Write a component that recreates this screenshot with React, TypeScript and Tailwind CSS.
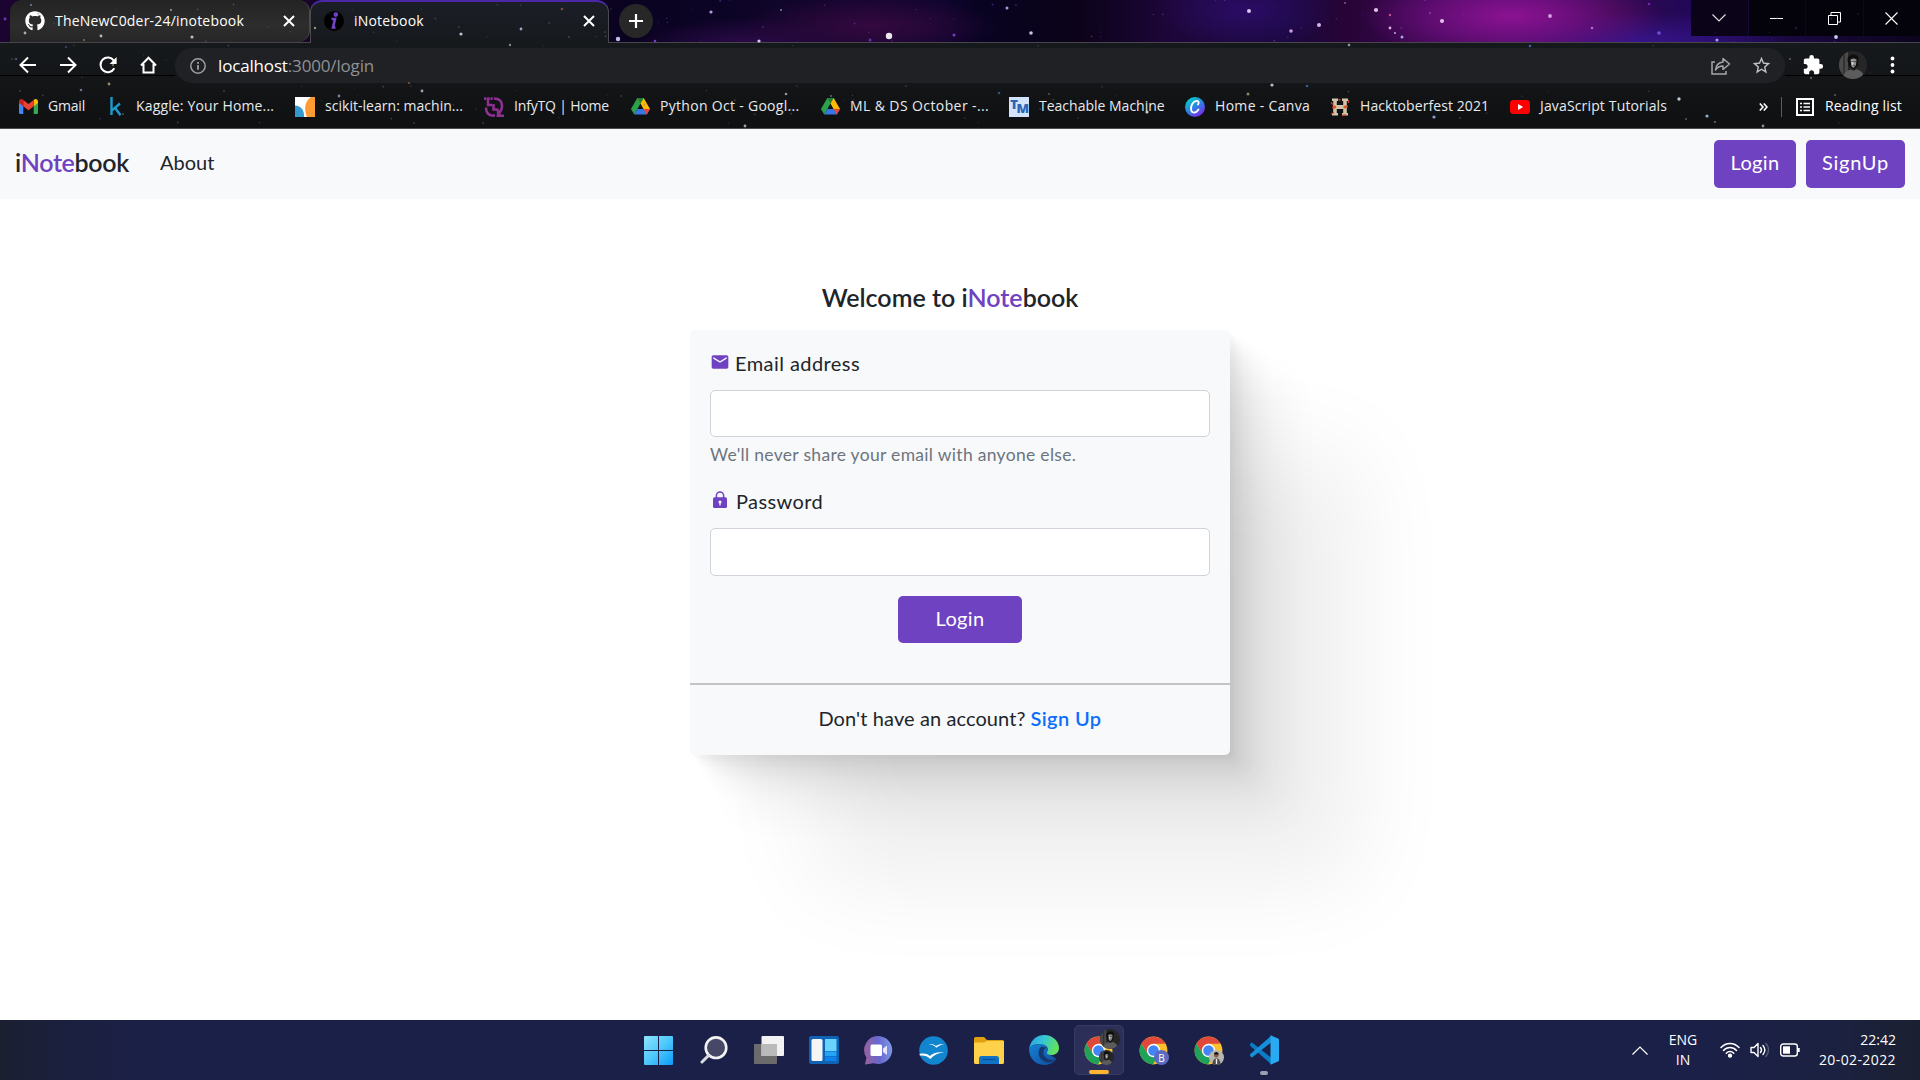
import { type ReactNode } from "react";
import { FaGithub } from "react-icons/fa";
import { MdEmail, MdExtension, MdStarOutline } from "react-icons/md";

function T({ className = "", children }: { className?: string; children: ReactNode }) {
  return <span className={`whitespace-pre ${className}`}>{children}</span>;
}

/* ---------- star field over the browser theme ---------- */

const BRIGHT: [number, number, number, string][] = [
  [889, 36, 3.2, "#ffffff"], [711, 12, 1.6, "#c9a7f5"], [759, 41, 1.6, "#e8dcff"], [1007, 8, 1.5, "#c9a7f5"],
  [1031, 33, 1.8, "#e6d2ff"], [954, 35, 1.5, "#7a45d8"], [870, 40, 1.5, "#6c34c8"], [1249, 11, 2, "#eadcff"],
  [1291, 31, 1.8, "#d9a8ee"], [1319, 25, 2, "#edc6f7"], [1376, 10, 2.1, "#f2d5fa"], [1390, 28, 1.4, "#eec4f0"],
  [1402, 37, 1.5, "#b7b5f7"], [1442, 21, 2, "#f0d5fa"], [1550, 16, 1.9, "#e0b0f0"], [1592, 28, 1.3, "#d070c8"],
  [1659, 33, 1.8, "#7a55e8"], [1717, 40, 1.6, "#9ab4ff"], [1836, 37, 1.9, "#d8e0ff"], [1390, 15, 1.2, "#d05a90"],
  [1395, 33, 1.1, "#c9a7f5"], [1345, 3, 1, "#a050b0"], [1430, 13, 1, "#9a40a8"], [1649, 4, 1.3, "#7a30b0"],
  [655, 41, 1.3, "#7a45d8"], [781, 10, 1, "#8b85a0"], [618, 39, 2.2, "#d8d4ff"], [5, 19, 1.4, "#7a3ad0"],
  [25, 33, 1.4, "#b9b9b9"], [101, 36, 1.4, "#c9c9c9"], [192, 37, 1.5, "#d5d5d5"], [171, 10, 1.2, "#8a8a8a"],
  [84, 40, 1, "#a06a60"], [31, 5, 1.1, "#7a8aa0"], [461, 34, 1.6, "#c8d4e8"], [521, 29, 1.4, "#a8b8e0"],
  [510, 45, 1.2, "#8a92a0"], [562, 9, 1.3, "#80504a"], [315, 28, 1.2, "#b0a080"], [109, 84, 1.4, "#a89a70"],
  [81, 90, 1.3, "#70809a"], [422, 91, 1.4, "#a8b4cc"], [409, 83, 1.1, "#90603a"], [786, 94, 1.3, "#a0a8b8"],
  [745, 126, 1.4, "#b0b4bc"], [1147, 112, 1.6, "#d8e0ea"], [1272, 85, 1.6, "#c8d4e8"], [1248, 94, 1.5, "#9a9468"],
  [1434, 117, 1.6, "#90b0e8"], [1679, 99, 1.7, "#d0d8e8"], [1707, 116, 1.6, "#a0b8e0"], [1763, 126, 1.4, "#9a9a9a"],
  [1307, 86, 1.3, "#4060a0"], [999, 93, 1.3, "#3c5888"], [1049, 94, 1.1, "#505a70"], [1349, 45, 1.3, "#a0a8b8"],
  [1530, 46, 1.3, "#4a68b0"], [831, 96, 1.2, "#505a70"], [16, 59, 1.3, "#405080"], [66, 47, 1, "#405080"],
  [113, 65, 1.2, "#7a7a60"], [1686, 119, 1, "#606060"], [1715, 122, 1.1, "#707070"], [1835, 95, 1.1, "#606060"],
  [123, 114, 1, "#555555"], [339, 96, 1.4, "#8090b0"], [1811, 78, 1.2, "#606468"], [1790, 59, 1.1, "#606468"],
];

const inOmnibox = (x: number, y: number) => x > 175 && x < 1786 && y > 46 && y < 84;

const FAINT = Array.from({ length: 190 }, (_, i) => ({
  x: (i * 733.7 + 91 * ((i * i) % 13)) % 1920,
  y: (i * 47.3 + 17 * ((i * 5) % 7)) % 127,
  r: 0.5 + (i % 3) * 0.2,
})).filter((s) => !inOmnibox(s.x, s.y));

function Stars() {
  return (
    <svg className="pointer-events-none absolute inset-0" width="1920" height="129" viewBox="0 0 1920 129">
      {FAINT.map((s, i) => (
        <circle key={i} cx={s.x} cy={s.y} r={s.r} fill={s.y < 42 && s.x > 620 ? "#7a4ac0" : "#6c7280"} opacity={0.5} />
      ))}
      {BRIGHT.map(([x, y, r, c], i) => (
        <circle key={i} cx={x} cy={y} r={r} fill={c} opacity={0.9} />
      ))}
    </svg>
  );
}

/* ---------- small browser icons ---------- */

const CloseX = () => (
  <svg width="12" height="12" viewBox="0 0 12 12" stroke="#fff" strokeWidth="2">
    <path d="M1 1l10 10M11 1L1 11" />
  </svg>
);

const NavArrow = ({ flip = false }: { flip?: boolean }) => (
  <svg width="18" height="18" viewBox="0 0 18 18" fill="none" stroke="#fff" strokeWidth="2" className={flip ? "-scale-x-100" : ""}>
    <path d="M17 9H2M9 1.5L1.5 9 9 16.5" />
  </svg>
);

const Reload = () => (
  <svg width="19" height="18" viewBox="0 0 19 18" fill="none" stroke="#fff" strokeWidth="2">
    <path d="M15.3 12.2A7.3 7.3 0 1 1 14.8 4.6" />
    <path d="M17.6 1v7h-7z" fill="#fff" stroke="none" />
  </svg>
);

const Home = () => (
  <svg width="17" height="18" viewBox="0 0 17 18" fill="none" stroke="#fff" strokeWidth="2">
    <path d="M1 9.5L8.5 1.7 16 9.5M3.5 8v8.6h10V8" />
  </svg>
);

const Gmail = () => (
  <svg width="19" height="15" viewBox="0 0 19 15">
    <path d="M0 3.2v10.5A1.3 1.3 0 0 0 1.3 15H4.3V6z" fill="#4285f4" />
    <path d="M19 3.2v10.5a1.3 1.3 0 0 1-1.3 1.3h-3V6z" fill="#34a853" />
    <path d="M14.7 1.5V7.2L19 4V2.5C19 .3 16.7-.7 15 .6z" fill="#fbbc04" />
    <path d="M0 2.5V4l4.3 3.2V1.5L4 .6C2.3-.7 0 .3 0 2.5z" fill="#c5221f" />
    <path d="M4.3 7.3V1.1L9.5 5l5.2-3.9v6.2L9.5 11.2z" fill="#ea4335" />
  </svg>
);

const Kaggle = () => (
  <svg width="12" height="20" viewBox="0 0 12 20" fill="none" stroke="#1b9ccf" strokeWidth="2.4">
    <path d="M1.5 0v18M10 6.5L2 13.3M5 10.8l5.5 7.5" />
  </svg>
);

const Scikit = () => (
  <svg width="20" height="20" viewBox="0 0 20 20">
    <path d="M0 0h20v20H0z" fill="#fff" />
    <path d="M20 0v20h-8C8.5 12 10 4 16 0z" fill="#ff9b33" />
    <path d="M0 8.5c6 0 9.5 5 9 11.5H0z" fill="#3499cd" />
  </svg>
);

const InfyTQ = () => (
  <svg width="20" height="20" viewBox="0 0 20 20" fill="none" stroke="#8e3092" strokeWidth="2.6">
    <path d="M0 1.6h9" strokeDasharray="2.4 .8" />
    <path d="M4 1v7h4M10 1.5c6 0 8 3 8 7.500 0 4-2 6.500-5 7.500M2 10.500c0 4 1.500 7.500 6 8h3M9.500 7v5.500h4M13 12l3 6.500M12.500 18.700H20" />
  </svg>
);

const Drive = () => (
  <svg width="19" height="17" viewBox="0 0 19 17">
    <path d="M6.3 0L0 11l3.2 5.6L9.5 5.6z" fill="#2ba24c" />
    <path d="M6.3 0h6.4L19 11h-6.4z" fill="#ffba00" />
    <path d="M3.2 16.6L6.4 11H19l-3.2 5.6z" fill="#3777e3" />
    <path d="M15.8 16.6L12.6 11H19z" fill="#ea4335" />
    <path d="M6.3 0h6.4L9.5 5.6z" fill="#188038" />
  </svg>
);

const TeachableIcon = () => (
  <span className="flex size-5 items-center justify-center bg-[#d2e3fc] font-['Open_Sans',sans-serif] text-[13px] font-extrabold leading-none tracking-[-1.5px] text-[#2b63b5]">
    <span className="-mt-1">T</span>
    <span className="mt-1">M</span>
  </span>
);

const Canva = () => (
  <svg width="20" height="20" viewBox="0 0 20 20">
    <defs>
      <linearGradient id="cv" x1="0" y1="0" x2="0.7" y2="1">
        <stop offset="0.2" stopColor="#08c3cc" />
        <stop offset="0.65" stopColor="#3a72e8" />
        <stop offset="1" stopColor="#7d2ae8" />
      </linearGradient>
    </defs>
    <circle cx="10" cy="10" r="10" fill="url(#cv)" />
    <path d="M13 7.5c1.5-2 .5-3.900-1.500-3.700C8 4.200 5.800 8.500 6 11.800c.2 5 4.800 4.800 7.500.6" fill="none" stroke="#fff" strokeWidth="1.8" strokeLinecap="round" />
  </svg>
);

const Hackto = () => (
  <svg width="20" height="20" viewBox="0 0 20 20">
    <path d="M2 1.5h6V4H6.8v4h6.4V4H12V1.5h6V4h-1.2v12H18v2.5h-6V16h1.2v-4H6.8v4H8v2.5H2V16h1.2V4H2z" fill="#cfc4a8" />
    <g fill="none" stroke="#c8402c" strokeWidth="1.3">
      <path d="M8.5 2.5l2 .5M18.5 3v3M1 5.5l2 2M1 17l3-1.5M12 18.5l4-.5M15 9.5h3M2 10.5h3" />
    </g>
    <circle cx="4.8" cy="10" r="1.5" fill="#f0501e" />
    <circle cx="14.8" cy="10" r="1.5" fill="#f0501e" />
  </svg>
);

const Youtube = () => (
  <svg width="20" height="14" viewBox="0 0 20 14">
    <rect width="20" height="14" rx="3.5" fill="#f00" />
    <path d="M8 4v6l5.2-3z" fill="#fff" />
  </svg>
);

const Portrait = ({ size }: { size: number }) => (
  <svg width={size} height={size} viewBox="0 0 28 28" className="rounded-full">
    <rect width="28" height="28" fill="#262626" />
    <path d="M0 0h9v28H0z" fill="#4a4a4a" />
    <path d="M5 0v28" stroke="#333" strokeWidth="2" />
    <path d="M8.500 9C8 3 18 1.500 19.500 6.500l-.5 8-4 4-5-3z" fill="#0e0e0e" />
    <path d="M11.500 8.500c1.500-1.500 4.500-1.500 6 0l-.5 5.500-2.500 3-2.200-1.800z" fill="#8f8f8f" />
    <path d="M12.300 9.500l2 .2.300 5-1.600-.7z" fill="#dcdcdc" />
    <path d="M11.500 10.600h6M13.500 14.200h2.500" stroke="#3a3a3a" strokeWidth=".8" />
    <path d="M3 28c1-6 5-8 8.500-9.500l3 1.200 3-1.500c4.500 1 7.500 4 8 9.800z" fill="#5c5c5c" />
  </svg>
);

/* ---------- browser chrome ---------- */

function TabStrip() {
  return (
    <div className="relative flex h-[43px] items-stretch border-b border-[#48464c] bg-[radial-gradient(ellipse_150px_46px_at_1512px_16px,#8a1292_0%,#7a1088b0_45%,transparent_100%),radial-gradient(ellipse_130px_30px_at_870px_26px,#34093f_0%,transparent_100%),radial-gradient(ellipse_110px_26px_at_745px_44px,#2c0a48_0%,transparent_100%),radial-gradient(ellipse_90px_40px_at_1245px_10px,#2b0c66_0%,transparent_100%),radial-gradient(ellipse_150px_30px_at_1640px_42px,#36148a_0%,transparent_100%),linear-gradient(90deg,#1b0430_0%,#180428_20%,#0a0320_33%,#0c0426_38%,#160530_45%,#10042e_49%,#080322_51%,#0b0318_56%,#1d0638_61%,#1c083c_64%,#1a083e_67%,#260436_70%,#3a0750_74%,#4a0b62_79%,#300848_84%,#22085a_88%,#17083c_94%,#0c041c_100%)]">
      <div className="ml-[10px] flex w-[300px] items-center rounded-xl rounded-bl-none border-r border-[#4b4b4d] bg-[linear-gradient(180deg,#232323,#2d2d2d_60%,#262626)] pb-px pl-[15px] pr-[14px]">
        <FaGithub className="size-5 text-white" />
        <T className="-mt-px ml-[10px] text-[14px] tracking-[0.2px] text-white">TheNewC0der-24/inotebook</T>
        <span className="ml-auto"><CloseX /></span>
      </div>
      <div className="relative -mb-px flex w-[299px] items-center rounded-t-xl border-x border-t-2 border-[#4b4b4f] border-t-[#4a28a8] bg-[linear-gradient(180deg,#1b1e26,#16191c)] pb-1 pl-[13px] pr-[13px]">
        <span className="flex size-5 items-center justify-center rounded-full bg-black">
          <svg width="10" height="18" viewBox="0 0 10 18" fill="none" stroke="#7443cc" strokeWidth="2.6">
            <path d="M2.5 7h3.5L4 15.5h2.5" />
            <circle cx="6.8" cy="2.6" r="1" />
          </svg>
        </span>
        <T className="-mt-px ml-[10px] text-[14px] tracking-[0.2px] text-white">iNotebook</T>
        <span className="ml-auto"><CloseX /></span>
      </div>
      <span className="ml-[10px] mt-1 flex size-[34px] items-center justify-center rounded-full bg-[#272727]">
        <svg width="14" height="14" viewBox="0 0 14 14" stroke="#fff" strokeWidth="2.2"><path d="M7 0v14M0 7h14" /></svg>
      </span>
      <div className="ml-auto flex h-9 w-[229px] items-center bg-[#04020a] [&>span]:flex [&>span]:h-9 [&>span]:flex-1 [&>span]:items-center [&>span]:justify-center">
        <span className="border-r border-[#140a30] bg-[#0b0418]">
          <svg width="14" height="8" viewBox="0 0 14 8" fill="none" stroke="#ddd" strokeWidth="1.2"><path d="M.5.5L7 7 13.5.5" /></svg>
        </span>
        <span className="border-r border-[#0c0822]"><i className="h-px w-[13px] bg-white" /></span>
        <span className="border-r border-[#0c0822]">
          <svg width="13" height="13" viewBox="0 0 13 13" fill="none" stroke="#fff" strokeWidth="1"><path d="M.5 3.5h9v9h-9zM3 3.5V.5h9.5V10h-3" /></svg>
        </span>
        <span>
          <svg width="13" height="13" viewBox="0 0 13 13" stroke="#fff" strokeWidth="1.1"><path d="M.5.5l12 12M12.5.5l-12 12" /></svg>
        </span>
      </div>
    </div>
  );
}

function AddressRow() {
  return (
    <div className="flex h-[45px] items-start bg-[linear-gradient(180deg,#16191c,#131517)]">
      <div className="flex h-[33px] w-[175px] items-center gap-[22px] border-b border-black pl-[19px] pt-[11px]">
        <NavArrow />
        <NavArrow flip />
        <Reload />
        <Home />
      </div>
      <div className="mt-[5px] flex h-[35px] w-[1610px] items-center rounded-full bg-[#202124] pl-[15px] pr-[13px]">
        <svg width="16" height="16" viewBox="0 0 16 16" fill="none" stroke="#9aa0a6" strokeWidth="1.5">
          <circle cx="8" cy="8" r="7.2" />
          <path d="M8 7v4.8M8 4v1.7" strokeWidth="1.8" />
        </svg>
        <T className="ml-[12px] text-[17px] tracking-[-0.16px] text-[#8e9195]"><span className="text-white">localhost</span>:3000/login</T>
        <svg className="ml-auto" width="20" height="18" viewBox="0 0 20 18" fill="none" stroke="#a4a6aa" strokeWidth="1.5">
          <path d="M4 5H1v12h14v-3" />
          <path d="M12 1.5V5c-4.5.5-7 3-7.5 8 2-3 4-4 7.5-4v3.5L18.5 7z" strokeLinejoin="round" />
        </svg>
        <MdStarOutline className="ml-[20px] size-[21px] text-[#c0c2c5]" />
      </div>
      <div className="flex h-[33px] flex-1 items-center border-b border-black [&>*]:mt-[11px]">
        <MdExtension className="ml-[17px] size-[22px] text-white" />
        <span className="ml-[15px]"><Portrait size={28} /></span>
        <svg className="ml-[23px]" width="5" height="18" viewBox="0 0 5 18" fill="#fff">
          <circle cx="2.5" cy="2.5" r="1.9" /><circle cx="2.5" cy="9" r="1.9" /><circle cx="2.5" cy="15.5" r="1.9" />
        </svg>
      </div>
    </div>
  );
}

function Bookmark({ icon, width, children }: { icon: ReactNode; width: string; children: ReactNode }) {
  return (
    <div className={`flex shrink-0 items-center ${width}`}>
      <span className="mr-[10px] flex w-5 shrink-0 items-center justify-center">{icon}</span>
      {children}
    </div>
  );
}

function BookmarkBar() {
  return (
    <div className="flex h-[41px] items-center border-b border-[#4a4a4a] bg-[linear-gradient(180deg,#121416,#0e1012)] pb-[3px] pl-[18px] text-[14px] text-[#e8eaed]">
      <Bookmark width="w-[88px]" icon={<Gmail />}><T className="-mt-0.5 tracking-[-0.2px]">Gmail</T></Bookmark>
      <Bookmark width="w-[189px]" icon={<Kaggle />}><T className="-mt-0.5 tracking-[0.15px]">Kaggle: Your Home...</T></Bookmark>
      <Bookmark width="w-[189px]" icon={<Scikit />}><T className="-mt-0.5 tracking-[0.03px]">scikit-learn: machin...</T></Bookmark>
      <Bookmark width="w-[146px]" icon={<InfyTQ />}><T className="-mt-0.5 tracking-[-0.18px]">InfyTQ | Home</T></Bookmark>
      <Bookmark width="w-[190px]" icon={<Drive />}><T className="-mt-0.5 tracking-[0.3px]">Python Oct - Googl...</T></Bookmark>
      <Bookmark width="w-[189px]" icon={<Drive />}><T className="-mt-0.5 tracking-[0.4px]">ML &amp; DS October -...</T></Bookmark>
      <Bookmark width="w-[176px]" icon={<TeachableIcon />}><T className="-mt-0.5">Teachable Machine</T></Bookmark>
      <Bookmark width="w-[145px]" icon={<Canva />}><T className="-mt-0.5 tracking-[0.31px]">Home - Canva</T></Bookmark>
      <Bookmark width="w-[180px]" icon={<Hackto />}><T className="-mt-0.5 tracking-[0.08px]">Hacktoberfest 2021</T></Bookmark>
      <Bookmark width="w-[180px]" icon={<Youtube />}><T className="-mt-0.5 tracking-[0.15px]">JavaScript Tutorials</T></Bookmark>
      <svg className="ml-[69px]" width="9" height="8" viewBox="0 0 9 8" fill="none" stroke="#fff" strokeWidth="1.6"><path d="M.8.5L4 4 .8 7.5M4.8.5L8 4 4.8 7.5" /></svg>
      <i className="ml-[13px] h-5 w-px bg-[#5a5c60]" />
      <svg className="ml-[14px]" width="18" height="18" viewBox="0 0 18 18" fill="none" stroke="#fff" strokeWidth="2">
        <path d="M1 1h16v16H1z" />
        <path d="M4 5.5h2M4 9h2M4 12.5h2M7.5 5.5H14M7.5 9H14M7.5 12.5H14" strokeWidth="1.6" />
      </svg>
      <T className="-mt-0.5 ml-[11px] tracking-[0.17px] text-white">Reading list</T>
    </div>
  );
}

/* ---------- web page ---------- */

const Lock = () => (
  <svg width="14" height="17" viewBox="0 0 14 17">
    <path d="M3.4 7V4.6a3.6 3.6 0 0 1 7.2 0V7" fill="none" stroke="#6f42c1" strokeWidth="1.5" />
    <rect y="6.3" width="14" height="10.7" rx="1.5" fill="#6f42c1" />
    <circle cx="7" cy="10.9" r="1.5" fill="#fff" />
    <path d="M6.4 11h1.2v3.4H6.4z" fill="#fff" />
  </svg>
);

function Brand() {
  return <>i<span className="text-[#6f42c1]">Note</span>book</>;
}

function NavBar() {
  return (
    <nav className="flex h-[70px] items-center bg-[#f8f9fb] px-[15px] text-[20px]">
      <T className="mb-[2px] text-[25px] font-semibold tracking-[-0.32px]">
        <Brand />
      </T>
      <T className="mb-1 ml-[31px]">About</T>
      <button className="ml-auto h-12 w-[82px] rounded-[5px] bg-[#6f42c1] pb-1 text-white"><T className="tracking-[0.36px]">Login</T></button>
      <button className="ml-[10px] h-12 w-[99px] rounded-[5px] bg-[#6f42c1] pb-1 text-white"><T className="tracking-[0.77px]">SignUp</T></button>
    </nav>
  );
}

function LoginCard() {
  return (
    <div className="mx-auto mt-[17px] flex h-[425px] w-[540px] flex-col rounded-[5px] bg-[#f8f9fb] shadow-[3.5px_3.5px_2.8px_rgba(0,0,0,0.02),8.4px_8.4px_6.6px_rgba(0,0,0,0.028),15.6px_15.6px_12.5px_rgba(0,0,0,0.035),27.9px_27.9px_22.4px_rgba(0,0,0,0.042),52.3px_52.3px_41.8px_rgba(0,0,0,0.05),125px_125px_100px_rgba(0,0,0,0.07)]">
      <div className="flex h-[355px] flex-col border-b-2 border-[#c2c4c6] px-5 pt-5">
        <label className="flex h-[30px] items-center">
          <MdEmail className="-mt-[7px] mr-[5px] size-[20px] text-[#6f42c1]" />
          <T className="-mt-1 tracking-[0.43px]">Email address</T>
        </label>
        <input type="email" className="mt-[10px] h-[47px] w-full rounded-[5px] border border-[#ced4da] bg-white" />
        <T className="mt-[5px] h-[26px] text-[17.5px] leading-[26px] tracking-[0.31px] text-[#6c757d]">We'll never share your email with anyone else.</T>
        <label className="mt-[20px] flex h-[30px] items-center">
          <span className="-mt-[7px] ml-[3px] mr-[9px]"><Lock /></span>
          <T className="-mt-1 tracking-[0.38px]">Password</T>
        </label>
        <input type="password" className="mt-[10px] h-[48px] w-full rounded-[5px] border border-[#ced4da] bg-white" />
        <button className="mx-auto mt-5 h-[47px] w-[124px] rounded-[5px] bg-[#6f42c1] pb-[3px] text-white"><T className="tracking-[0.36px]">Login</T></button>
      </div>
      <p className="flex flex-1 items-center justify-center pb-1">
        <T className="tracking-[0.1px]">Don't have an account?</T>
        <T className="ml-[5px] font-semibold tracking-[0.39px] text-[#0d6efd]">Sign Up</T>
      </p>
    </div>
  );
}

/* ---------- taskbar ---------- */

const ChromeLogo = () => (
  <svg width="29" height="29" viewBox="0 0 48 48">
    <circle cx="24" cy="24" r="23" fill="#fbc02d" />
    <path d="M4 12.5A23 23 0 0 0 23 47l10.5-18L24 24 14.5 29z" fill="#1fa35a" />
    <path d="M24 13h20A23 23 0 0 0 4 12.5L14.5 29z" fill="#e0483c" />
    <circle cx="24" cy="24" r="11" fill="#fff" />
    <circle cx="24" cy="24" r="8.7" fill="#4285f4" />
  </svg>
);

const Start = () => (
  <svg width="29" height="29" viewBox="0 0 29 29">
    <defs>
      <linearGradient id="st" x1="0" y1="0" x2="1" y2="1">
        <stop offset="0" stopColor="#8fe3fb" /><stop offset="0.5" stopColor="#4fc8fb" /><stop offset="1" stopColor="#0a9bf8" />
      </linearGradient>
    </defs>
    <path d="M0 1a1 1 0 0 1 1-1h13v14H0zM15 0h13a1 1 0 0 1 1 1v13H15zM0 15h14v14H1a1 1 0 0 1-1-1zM15 15h14v13a1 1 0 0 1-1 1H15z" fill="url(#st)" />
  </svg>
);

const Search = () => (
  <svg width="28" height="28" viewBox="0 0 28 28" fill="none">
    <circle cx="16" cy="11.7" r="10.3" fill="#454867" stroke="#f3f3f3" strokeWidth="2.6" />
    <path d="M8.5 19.5L2 26" stroke="#d8dcdf" strokeWidth="3" strokeLinecap="round" />
  </svg>
);

const TaskView = () => (
  <svg width="30" height="28" viewBox="0 0 30 28">
    <rect y="8" width="23" height="20" rx="1" fill="#6b6b6b" />
    <rect x="7.5" width="22.5" height="20" rx="1" fill="#f2f2f2" />
    <path d="M7.5 8H23v12H7.5z" fill="#bababa" />
  </svg>
);

const Widgets = () => (
  <svg width="30" height="28" viewBox="0 0 30 28">
    <rect width="30" height="28" rx="2" fill="#0f62b4" />
    <rect x="2.5" y="3" width="11" height="22" rx="1.5" fill="#f5f5f5" />
    <path d="M16 3h11.5v12H16z" fill="#69d3fd" />
    <path d="M16 15.5h11.5v4.5H16z" fill="#26a3f4" />
    <path d="M16 20.5h11.5V25H16z" fill="#0c84ea" />
  </svg>
);

const Chat = () => (
  <svg width="29" height="29" viewBox="0 0 29 29">
    <defs>
      <linearGradient id="ch" x1="0" y1="0.3" x2="1" y2="0.2">
        <stop offset="0" stopColor="#96629f" /><stop offset="0.5" stopColor="#6867cf" /><stop offset="1" stopColor="#7d9be8" />
      </linearGradient>
    </defs>
    <path d="M14.5 0a14 14 0 1 1-5 27.2L1 28.5l1.4-7A14 14 0 0 1 14.5 0z" fill="url(#ch)" />
    <rect x="6.5" y="8.5" width="11.5" height="11.5" rx="1.5" fill="#fff" />
    <path d="M19 12.5l4-3v9.5l-4-3z" fill="#e8e8fa" />
  </svg>
);

const OpenOffice = () => (
  <svg width="29" height="29" viewBox="0 0 29 29">
    <circle cx="14.5" cy="14.5" r="14.3" fill="#1285cf" />
    <path d="M9.5 8c3 0 5.5.3 7.5 2 2-1.8 5-2 8-1.6-3 .2-5.500 1.200-7.700 3.300C15.5 9.500 13 8.300 9.5 8z" fill="#fff" />
    <path d="M.5 18c4-1 7.5-.5 10.2 2 3.5-3.5 9-4.500 14.300-3.500-5.500.3-10 2.500-13.700 6.500C8.5 20 5 19 .8 19.500z" fill="#fff" />
  </svg>
);

const Folder = () => (
  <svg width="30" height="27" viewBox="0 0 30 27">
    <path d="M0 1.5A1.5 1.5 0 0 1 1.5 0H10l3 3h15.5A1.5 1.5 0 0 1 30 4.5V8H0z" fill="#e0a010" />
    <path d="M0 5.5h10L13 4h17v21.5a1.5 1.5 0 0 1-1.5 1.5h-27A1.5 1.5 0 0 1 0 25.5z" fill="#ffd04a" />
    <path d="M5 27v-5.5a2.5 2.5 0 0 1 2.5-2.5h15a2.5 2.5 0 0 1 2.5 2.5V27z" fill="#0f73c8" />
    <path d="M8.5 22.5h13" stroke="#0b4d90" strokeWidth="1.2" />
  </svg>
);

const Edge = () => (
  <svg width="30" height="30" viewBox="0 0 30 30">
    <defs>
      <linearGradient id="e1" x1="0" y1="0" x2="1" y2="0.3">
        <stop offset="0" stopColor="#2b9fe2" /><stop offset="0.5" stopColor="#35c6d8" /><stop offset="1" stopColor="#62e060" />
      </linearGradient>
      <linearGradient id="e2" x1="0" y1="0" x2="1" y2="1">
        <stop offset="0" stopColor="#1583d8" /><stop offset="1" stopColor="#104c9c" />
      </linearGradient>
    </defs>
    <path d="M.5 11C-1.500 21 5 30 15 30c5.500 0 10-2.500 12.500-6L20 19 16 8z" fill="url(#e2)" />
    <path d="M.5 12C2.5 4 8.5 0 15 0c9 0 15 6.5 15 13 0 4.5-3.500 7-7.500 7-3 0-5-1-4.500-2.500 2-3 .5-8.500-6-8.500C7 9 2.500 10 .5 12z" fill="url(#e1)" />
    <path d="M12.5 11.500C8 14.500 8.500 24 16 27c4 1.500 8.500 0 11.500-3-4 1.800-9 1-11.500-2.200-2.200-2.800-2.500-7 1.500-9z" fill="#17386f" />
  </svg>
);

const VsCode = () => (
  <svg width="30" height="30" viewBox="0 0 30 30">
    <path d="M1.5 8.300L3 7.500l19 15V29L.8 10.500z" fill="#0a7bc4" />
    <path d="M1.5 21.500L3 22.500l19-15V1L.8 19.500z" fill="#1591dc" />
    <path d="M21.5.3L29 3.500a1.500 1.500 0 0 1 1 1.500v20a1.500 1.500 0 0 1-1 1.500l-7.500 3.200z" fill="#29aaf3" />
  </svg>
);

function Slot({ children }: { children: ReactNode }) {
  return <div className="relative flex h-[50px] w-[55px] items-center justify-center">{children}</div>;
}

function Taskbar() {
  return (
    <footer className="flex h-[60px] items-center bg-[linear-gradient(90deg,#1b1f30_0px,#1b2040_70px,#1b2048_160px,#1b2048_1700px,#1b2140_1840px,#1b2030_1920px)] pl-[631px] pr-[24px] text-[14px] text-white">
      <Slot><Start /></Slot>
      <Slot><Search /></Slot>
      <Slot><TaskView /></Slot>
      <Slot><Widgets /></Slot>
      <Slot><Chat /></Slot>
      <Slot><OpenOffice /></Slot>
      <Slot><Folder /></Slot>
      <Slot><Edge /></Slot>
      <Slot>
        <div className="relative flex size-[50px] items-center justify-center rounded-[5px] border border-[#383c62] bg-[#2c3058]">
          <ChromeLogo />
          <span className="absolute left-[25px] top-[3px]"><Portrait size={20} /></span>
          <span className="absolute left-[24px] top-[24px]"><Portrait size={15} /></span>
          <i className="absolute bottom-0 left-[14px] h-1 w-5 rounded-full bg-[#ffb431]" />
        </div>
      </Slot>
      <Slot>
        <ChromeLogo />
        <span className="absolute left-[28px] top-[25px] flex size-[15px] items-center justify-center rounded-full bg-[#5c6bc0] text-[10px] leading-none">B</span>
      </Slot>
      <Slot>
        <ChromeLogo />
        <svg className="absolute left-[28px] top-[25px]" width="15" height="15" viewBox="0 0 15 15">
          <circle cx="7.5" cy="7.5" r="7.5" fill="#b9b6b0" />
          <path d="M3.5 14C4 10 5 8.5 7.5 8.5S11 10 11.5 14a7.5 7.5 0 0 1-8 0z" fill="#4a4a4c" />
          <circle cx="7.3" cy="5.3" r="2.3" fill="#8a5a44" />
          <path d="M5 4.5c0-3.5 5-3 4.7 0z" fill="#111" />
          <path d="M6.8 9h1.4v5H6.8z" fill="#eee" />
        </svg>
      </Slot>
      <Slot>
        <VsCode />
        <i className="absolute bottom-0 h-1 w-2 rounded-full bg-[#9c9fb0]" />
      </Slot>
      <svg className="ml-[341px]" width="16" height="9" viewBox="0 0 16 9" fill="none" stroke="#fff" strokeWidth="1.2"><path d="M.5 8.5L8 1l7.5 7.5" /></svg>
      <div className="ml-[20px] flex w-[30px] flex-col items-center leading-5">
        <T>ENG</T>
        <T>IN</T>
      </div>
      <svg className="ml-[22px]" width="20" height="16" viewBox="0 0 20 16" fill="none" stroke="#fff" strokeWidth="1.5" strokeLinecap="round">
        <path d="M1 5.500c5-5.500 13-5.500 18 0M3.500 8.500c3.600-4 9.400-4 13 0M6.300 11.200c2-2.200 5.400-2.200 7.400 0" />
        <circle cx="10" cy="13.7" r="1.4" fill="#fff" />
      </svg>
      <svg className="ml-[10px]" width="20" height="18" viewBox="0 0 20 18" fill="none" stroke="#fff" strokeWidth="1.4">
        <path d="M1 6.500v5h3l4 4v-13l-4 4z" strokeLinejoin="round" />
        <path d="M10.500 6.500c1.200 1.500 1.200 3.500 0 5M13 4.500c2.300 2.800 2.300 6.200 0 9" strokeLinecap="round" />
        <path d="M15.500 2c4 4 4 10 0 14" stroke="#5a5e78" />
      </svg>
      <svg className="ml-[10px]" width="20" height="14" viewBox="0 0 20 14" fill="none" stroke="#fff" strokeWidth="1.4">
        <rect x=".7" y="1" width="16.6" height="12" rx="2.5" />
        <rect x="3" y="3.3" width="7" height="7.4" fill="#fff" stroke="none" />
        <path d="M18.700 5v4" strokeWidth="2" />
      </svg>
      <div className="ml-auto flex flex-col items-end leading-5">
        <T>22:42</T>
        <T className="tracking-[0.4px]">20-02-2022</T>
      </div>
    </footer>
  );
}

export default function App() {
  return (
    <div className="flex h-[1080px] w-[1920px] flex-col overflow-hidden bg-white font-['Open_Sans',sans-serif]">
      <header className="relative">
        <TabStrip />
        <AddressRow />
        <BookmarkBar />
        <Stars />
      </header>
      <main className="flex-1 overflow-hidden bg-white font-['Lato',sans-serif] text-[20px] text-[#212529]">
        <NavBar />
        <h1 className="mt-[83px] flex h-[31px] items-center justify-center pr-[20px] text-[25px] font-semibold">
          <T>Welcome to <Brand /></T>
        </h1>
        <LoginCard />
      </main>
      <Taskbar />
    </div>
  );
}
